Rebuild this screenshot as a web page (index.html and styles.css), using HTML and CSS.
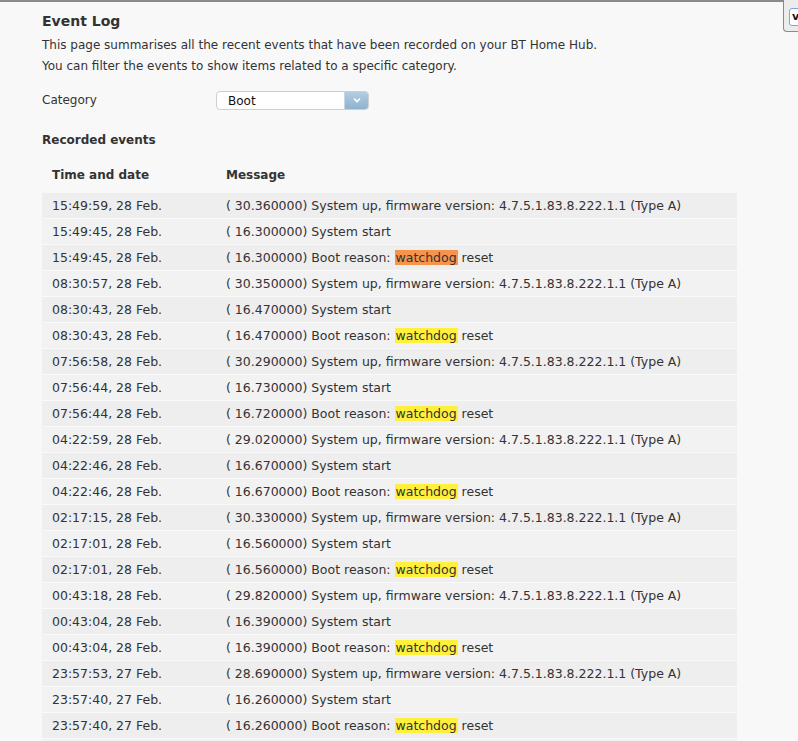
FILE: index.html
```html
<!DOCTYPE html>
<html>
<head>
<meta charset="utf-8">
<link rel="stylesheet" href="styles.css">
</head>
<body>
<div class="frame"></div>
<div class="side"><div class="side-input">v</div></div>
<div class="page">
  <h1 class="title">Event Log</h1>
  <p class="intro">This page summarises all the recent events that have been recorded on your BT Home Hub.<br>You can filter the events to show items related to a specific category.</p>
  <div class="filter">
    <span class="filter-label">Category</span>
    <div class="select"><span class="select-text">Boot</span><span class="select-btn"><svg width="10" height="6" viewBox="0 0 10 6"><path d="M2 1.5 L5 4.5 L8 1.5" fill="none" stroke="#fff" stroke-width="1.6"/></svg></span></div>
  </div>
  <h2 class="subtitle">Recorded events</h2>
  <table class="log">
    <thead>
      <tr><th class="c-time">Time and date</th><th>Message</th></tr>
    </thead>
    <tbody>
      <tr><td>15:49:59, 28 Feb.</td><td>( 30.360000) System up, firmware version: 4.7.5.1.83.8.222.1.1 (Type A)</td></tr>
      <tr><td>15:49:45, 28 Feb.</td><td>( 16.300000) System start</td></tr>
      <tr><td>15:49:45, 28 Feb.</td><td>( 16.300000) Boot reason: <span class="hl-orange">watchdog</span> reset</td></tr>
      <tr><td>08:30:57, 28 Feb.</td><td>( 30.350000) System up, firmware version: 4.7.5.1.83.8.222.1.1 (Type A)</td></tr>
      <tr><td>08:30:43, 28 Feb.</td><td>( 16.470000) System start</td></tr>
      <tr><td>08:30:43, 28 Feb.</td><td>( 16.470000) Boot reason: <span class="hl-yellow">watchdog</span> reset</td></tr>
      <tr><td>07:56:58, 28 Feb.</td><td>( 30.290000) System up, firmware version: 4.7.5.1.83.8.222.1.1 (Type A)</td></tr>
      <tr><td>07:56:44, 28 Feb.</td><td>( 16.730000) System start</td></tr>
      <tr><td>07:56:44, 28 Feb.</td><td>( 16.720000) Boot reason: <span class="hl-yellow">watchdog</span> reset</td></tr>
      <tr><td>04:22:59, 28 Feb.</td><td>( 29.020000) System up, firmware version: 4.7.5.1.83.8.222.1.1 (Type A)</td></tr>
      <tr><td>04:22:46, 28 Feb.</td><td>( 16.670000) System start</td></tr>
      <tr><td>04:22:46, 28 Feb.</td><td>( 16.670000) Boot reason: <span class="hl-yellow">watchdog</span> reset</td></tr>
      <tr><td>02:17:15, 28 Feb.</td><td>( 30.330000) System up, firmware version: 4.7.5.1.83.8.222.1.1 (Type A)</td></tr>
      <tr><td>02:17:01, 28 Feb.</td><td>( 16.560000) System start</td></tr>
      <tr><td>02:17:01, 28 Feb.</td><td>( 16.560000) Boot reason: <span class="hl-yellow">watchdog</span> reset</td></tr>
      <tr><td>00:43:18, 28 Feb.</td><td>( 29.820000) System up, firmware version: 4.7.5.1.83.8.222.1.1 (Type A)</td></tr>
      <tr><td>00:43:04, 28 Feb.</td><td>( 16.390000) System start</td></tr>
      <tr><td>00:43:04, 28 Feb.</td><td>( 16.390000) Boot reason: <span class="hl-yellow">watchdog</span> reset</td></tr>
      <tr><td>23:57:53, 27 Feb.</td><td>( 28.690000) System up, firmware version: 4.7.5.1.83.8.222.1.1 (Type A)</td></tr>
      <tr><td>23:57:40, 27 Feb.</td><td>( 16.260000) System start</td></tr>
      <tr><td>23:57:40, 27 Feb.</td><td>( 16.260000) Boot reason: <span class="hl-yellow">watchdog</span> reset</td></tr>
      <tr><td></td><td></td></tr>
    </tbody>
  </table>
</div>
</body>
</html>
```

FILE: styles.css
```css
html, body {
  margin: 0;
  padding: 0;
  background: #f8f8f8;
  overflow: hidden;
  height: 741px;
}
body {
  font-family: "DejaVu Sans", Verdana, sans-serif;
  font-size: 12px;
  color: #333;
  position: relative;
}
.frame {
  position: absolute;
  left: 0;
  top: 0;
  width: 784px;
  height: 0;
  border-top: 2px solid #8a8a8a;
}
.side {
  position: absolute;
  left: 783px;
  top: 0;
  width: 20px;
  height: 31px;
  background: #ececec;
  border-left: 1px solid #8a8a8a;
  border-bottom: 1px solid #8a8a8a;
  border-bottom-left-radius: 4px;
}
.side-input {
  position: absolute;
  left: 5px;
  top: 8px;
  width: 20px;
  height: 16px;
  background: #fff;
  border: 1px solid #7aa7e0;
  border-radius: 3px;
  font-size: 11px;
  font-weight: bold;
  line-height: 16px;
  padding-left: 2px;
  color: #111;
}
.page {
  padding: 11px 0 0 42px;
}
.title {
  margin: 0;
  font-size: 14px;
  font-weight: bold;
  line-height: 20px;
}
.intro {
  margin: 4px 0 0 0;
  line-height: 21px;
}
.filter {
  display: flex;
  align-items: center;
  margin-top: 13px;
  height: 20px;
}
.filter-label {
  width: 174px;
}
.select {
  display: flex;
  width: 153px;
  height: 19px;
  box-sizing: border-box;
  border: 1px solid #cfcfcf;
  border-radius: 4px;
  background: #fff;
  overflow: hidden;
}
.select-text {
  flex: 1;
  padding-left: 11px;
  line-height: 18px;
  color: #111;
  font-size: 12px;
}
.select-btn {
  width: 23px;
  display: flex;
  align-items: center;
  justify-content: center;
  background: linear-gradient(#b4cde0, #8fb2cf);
  border-left: 1px solid #c7d7e4;
}
.subtitle {
  margin: 22px 0 0 0;
  font-size: 12px;
  font-weight: bold;
  line-height: 16px;
}
.log {
  margin-top: 20px;
  width: 695px;
  border-collapse: collapse;
}
.log th {
  text-align: left;
  font-weight: bold;
  padding: 0 10px;
  height: 25px;
  vertical-align: top;
  line-height: 14px;
  padding-top: 0;
}
.log th.c-time {
  width: 154px;
}
.log td {
  padding: 0 10px;
  height: 25px;
  line-height: 25px;
  font-size: 12.5px;
  border-bottom: 1px solid #f9f9f9;
  white-space: nowrap;
}
.log tbody tr:nth-child(odd) td {
  background: #eeeeee;
}
.log tbody tr:nth-child(even) td {
  background: #f2f2f2;
}
.hl-orange {
  background: #f7944c;
  padding: 0 1px;
}
.hl-yellow {
  background: #fff03c;
  padding: 0 1px;
}
```
